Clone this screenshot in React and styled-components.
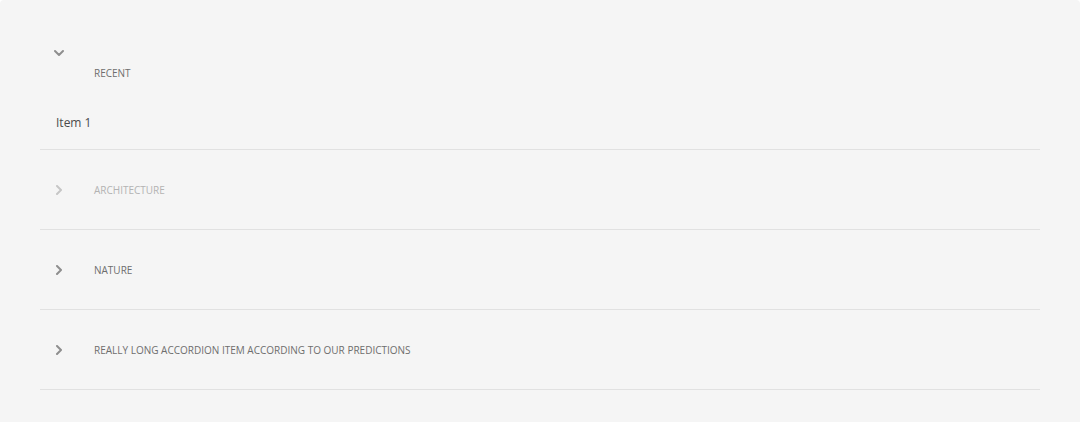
import React, { useState } from "react";
import styled, { createGlobalStyle } from "styled-components";

const GlobalStyle = createGlobalStyle`
  *, *::before, *::after { box-sizing: border-box; }
  body { margin: 0; background: #ffffff; }
`;

const Panel = styled.main`
  min-height: 100vh;
  padding: 40px 40px 32px;
  background: #f5f5f5;
  border-radius: 4px 4px 0 0;
  font-family: "Open Sans", "Noto Sans", sans-serif;
`;

const Item = styled.section`
  border-bottom: 1px solid #e1e1e1;
`;

const Heading = styled.h3`
  margin: 0;
  font-weight: 400;
`;

const Trigger = styled.button`
  display: flex;
  flex-direction: ${(p) => (p.$open ? "column" : "row")};
  align-items: ${(p) => (p.$open ? "flex-start" : "center")};
  width: 100%;
  min-height: ${(p) => (p.$open ? "56px" : "79px")};
  padding: ${(p) => (p.$open ? "8px 14px 0" : "1px 14px 0")};
  border: 0;
  background: transparent;
  color: #6e6e6e;
  font: inherit;
  text-align: left;
  cursor: pointer;

  &:disabled {
    color: #b3b3b3;
    cursor: default;
  }
`;

const Chevron = styled.svg`
  flex: none;
  width: 10px;
  height: 10px;
  fill: none;
  stroke: #8e8e8e;
  stroke-width: 2;
  stroke-linecap: round;
  stroke-linejoin: round;
  transform: ${(p) => (p.$open ? "rotate(90deg)" : "none")};

  ${Trigger}:disabled & {
    stroke: #c6c6c6;
  }
`;

const Label = styled.span`
  margin-left: ${(p) => (p.$open ? "40px" : "30px")};
  margin-top: ${(p) => (p.$open ? "7px" : "0")};
  font-size: 10px;
  line-height: 16px;
  text-transform: uppercase;
`;

const Content = styled.div`
  padding: 16px;
  color: #4b4b4b;
  font-size: 12px;
  line-height: 21px;
`;

const items = [
  { id: "recent", title: "Recent", body: "Item 1" },
  { id: "architecture", title: "Architecture", body: "Item 2", disabled: true },
  { id: "nature", title: "Nature", body: "Item 3" },
  { id: "long", title: "Really long accordion item according to our predictions", body: "Item 4" },
];

export default function App() {
  const [openId, setOpenId] = useState("recent");
  return (
    <>
      <GlobalStyle />
      <Panel>
        {items.map(({ id, title, body, disabled }) => {
          const open = openId === id;
          return (
            <Item key={id}>
              <Heading>
                <Trigger
                  type="button"
                  id={`${id}-trigger`}
                  $open={open}
                  disabled={disabled}
                  aria-expanded={open}
                  aria-controls={open ? `${id}-content` : undefined}
                  onClick={() => setOpenId(open ? null : id)}
                >
                  <Chevron viewBox="0 0 10 10" $open={open} aria-hidden="true">
                    <path d="M3 1L7 5L3 9" />
                  </Chevron>
                  <Label $open={open}>{title}</Label>
                </Trigger>
              </Heading>
              {open && (
                <Content id={`${id}-content`} role="region" aria-labelledby={`${id}-trigger`}>
                  {body}
                </Content>
              )}
            </Item>
          );
        })}
      </Panel>
    </>
  );
}
